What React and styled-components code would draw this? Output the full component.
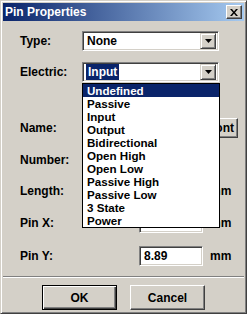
import React from "react";
import styled, { createGlobalStyle, css } from "styled-components";

const Global = createGlobalStyle`
  html, body { margin: 0; padding: 0; background: #d4d0c8; }
  * { box-sizing: border-box; }
  body { font-family: "Liberation Sans", Arial, sans-serif; }
`;

const Window = styled.div`
  width: 247px;
  height: 314px;
  background: #d4d0c8;
  border: 1px solid;
  border-color: #d4d0c8 #404040 #404040 #d4d0c8;
  box-shadow: inset 1px 1px #ffffff, inset -1px -1px #808080;
  padding: 2px;
  display: flex;
  flex-direction: column;
  font-size: 12px;
  font-weight: bold;
  color: #000;
`;

const TitleBar = styled.div`
  height: 18px;
  display: flex;
  align-items: center;
  justify-content: space-between;
  padding: 0 2px 0 2px;
  background: linear-gradient(to right, #0a246a, #a6caf0);
  color: #fff;
  font-size: 12px;
  font-weight: bold;
`;

const CloseButton = styled.div`
  width: 16px;
  height: 14px;
  background: #d4d0c8;
  border: 1px solid;
  border-color: #ffffff #404040 #404040 #ffffff;
  box-shadow: inset -1px -1px #808080;
  display: flex;
  align-items: center;
  justify-content: center;
`;

const Form = styled.div`
  padding-left: 17px;
  display: flex;
  flex-direction: column;
`;

const Row = styled.div`
  height: 20px;
  margin-top: ${(p) => p.$top}px;
  display: flex;
  align-items: center;
  position: relative;
  z-index: ${(p) => (p.$raised ? 5 : "auto")};
`;

const Label = styled.div`
  width: 62px;
  flex: none;
`;

const sunken = css`
  border: 1px solid;
  border-color: #808080 #ffffff #ffffff #808080;
  box-shadow: inset 1px 1px #404040, inset -1px -1px #d4d0c8;
  background: #fff;
`;

const SelectBox = styled.div`
  ${sunken};
  width: ${(p) => p.$w}px;
  height: 20px;
  display: flex;
  align-items: center;
  padding: 2px;
  position: relative;
`;

const SelectText = styled.div`
  flex: 1;
  height: 16px;
  display: flex;
  align-items: center;
  padding-left: ${(p) => (p.$sel ? 1 : 2)}px;
`;

const Highlight = styled.span`
  background: #0a246a;
  color: #fff;
  height: 16px;
  line-height: 16px;
  padding: 0 2px;
`;

const DropButton = styled.div`
  width: 16px;
  height: 16px;
  background: #d4d0c8;
  border: 1px solid;
  border-color: #d4d0c8 #404040 #404040 #d4d0c8;
  box-shadow: inset 1px 1px #ffffff, inset -1px -1px #808080;
  display: flex;
  align-items: center;
  justify-content: center;
`;

const List = styled.div`
  position: absolute;
  top: 20px;
  left: -1px;
  width: 138px;
  border: 1px solid #000;
  background: #fff;
  z-index: 5;
`;

const Item = styled.div`
  height: 13px;
  line-height: 13px;
  padding-left: 4px;
  font-size: 11.6px;
  ${(p) =>
    p.$active &&
    css`
      background: #0a246a;
      color: #fff;
    `}
`;

const TextInput = styled.div`
  ${sunken};
  width: ${(p) => p.$w}px;
  margin-left: ${(p) => p.$offset || 0}px;
  height: 20px;
  padding: 0 4px;
  display: flex;
  align-items: center;
`;

const Unit = styled.div`
  margin-left: 7px;
`;

const Button = styled.div`
  width: ${(p) => p.$w}px;
  height: ${(p) => p.$h}px;
  margin-left: ${(p) => p.$ml || 0}px;
  background: #d4d0c8;
  display: flex;
  align-items: center;
  justify-content: center;
  border: 1px solid;
  border-color: #ffffff #404040 #404040 #ffffff;
  box-shadow: inset -1px -1px #808080;
  ${(p) =>
    p.$default &&
    css`
      border: 1px solid #000;
      box-shadow: inset 1px 1px #ffffff, inset -1px -1px #404040,
        inset -2px -2px #808080;
    `}
`;

const Separator = styled.div`
  margin-top: 10px;
  height: 2px;
  border-top: 1px solid #808080;
  border-bottom: 1px solid #ffffff;
`;

const ButtonRow = styled.div`
  margin-top: 7px;
  display: flex;
  justify-content: center;
  gap: 13px;
`;

const Arrow = () => (
  <svg width="7" height="4" viewBox="0 0 7 4">
    <path d="M0 0H7L3.5 4Z" fill="#000" />
  </svg>
);

const CloseGlyph = () => (
  <svg width="8" height="7" viewBox="0 0 8 7">
    <path d="M0 0h2l2 2.5L6 0h2L5 3.5 8 7H6L4 4.5 2 7H0l3-3.5Z" fill="#000" />
  </svg>
);

const items = [
  "Undefined",
  "Passive",
  "Input",
  "Output",
  "Bidirectional",
  "Open High",
  "Open Low",
  "Passive High",
  "Passive Low",
  "3 State",
  "Power",
];

export default function App() {
  return (
    <>
      <Global />
      <Window>
        <TitleBar>
          <span>Pin Properties</span>
          <CloseButton>
            <CloseGlyph />
          </CloseButton>
        </TitleBar>
        <Form>
          <Row $top={10}>
            <Label>Type:</Label>
            <SelectBox $w={137}>
              <SelectText>None</SelectText>
              <DropButton>
                <Arrow />
              </DropButton>
            </SelectBox>
          </Row>
          <Row $top={11} $raised>
            <Label>Electric:</Label>
            <SelectBox $w={137}>
              <SelectText $sel>
                <Highlight>Input</Highlight>
              </SelectText>
              <DropButton>
                <Arrow />
              </DropButton>
              <List>
                {items.map((t, i) => (
                  <Item key={t} $active={i === 0}>
                    {t}
                  </Item>
                ))}
              </List>
            </SelectBox>
          </Row>
          <Row $top={36}>
            <Label>Name:</Label>
            <TextInput $w={118} />
            <Button $w={34} $h={20} $ml={4}>
              Font
            </Button>
          </Row>
          <Row $top={12}>
            <Label>Number:</Label>
            <TextInput $w={57} />
          </Row>
          <Row $top={11}>
            <Label>Length:</Label>
            <TextInput $w={64} $offset={57} />
            <Unit>mm</Unit>
          </Row>
          <Row $top={12}>
            <Label>Pin X:</Label>
            <TextInput $w={64} $offset={57} />
            <Unit>mm</Unit>
          </Row>
          <Row $top={13}>
            <Label>Pin Y:</Label>
            <TextInput $w={64} $offset={57}>
              8.89
            </TextInput>
            <Unit>mm</Unit>
          </Row>
        </Form>
        <Separator />
        <ButtonRow>
          <Button $w={75} $h={25} $default>
            OK
          </Button>
          <Button $w={75} $h={25}>
            Cancel
          </Button>
        </ButtonRow>
      </Window>
    </>
  );
}
